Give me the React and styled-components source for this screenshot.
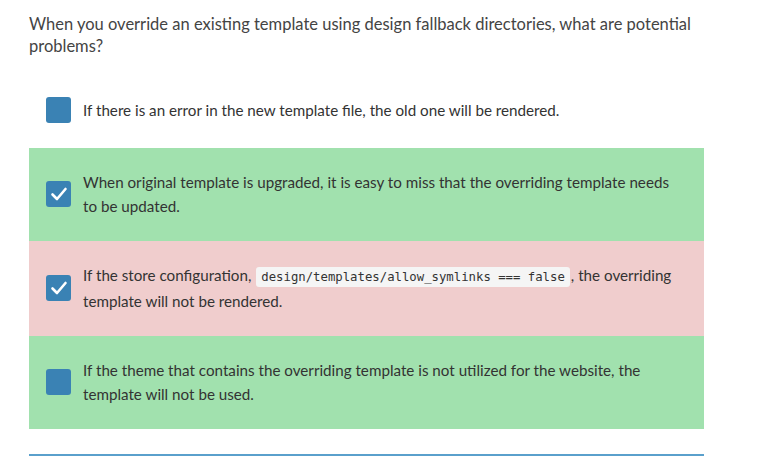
import styled, { createGlobalStyle } from "styled-components";

const GlobalStyle = createGlobalStyle`
  body {
    margin: 0;
    background: #fff;
    font-family: Lato, "Open Sans", sans-serif;
    color: #333;
  }
`;

const Page = styled.div`
  width: 675px;
  padding: 13px 0 0 29px;
`;

const Question = styled.p`
  margin: 0 0 18px;
  font-size: 16.5px;
  line-height: 22px;
  color: #444;
`;

const Options = styled.div`
  display: flex;
  flex-direction: column;
`;

const Option = styled.div`
  display: flex;
  align-items: center;
  gap: 12px;
  padding: ${({ $state }) => ($state ? "22px 18px 23px 17px" : "22px 18px 25px 17px")};
  background: ${({ $state }) =>
    $state === "correct" ? "#a1e1ae" : $state === "wrong" ? "#f0cdcd" : "transparent"};
`;

const Box = styled.div`
  flex: none;
  width: 25px;
  height: 26px;
  border-radius: 3px;
  background: #3a82b4;
  display: flex;
  align-items: center;
  justify-content: center;
`;

const Label = styled.div`
  font-size: 15.2px;
  line-height: 24px;
  color: #333;
`;

const Code = styled.code`
  font-family: "DejaVu Sans Mono", monospace;
  font-size: 12.3px;
  background: #f5f5f5;
  border-radius: 3px;
  padding: 3px 5px;
  margin: 0 1px;
  color: #333;
`;

const Divider = styled.div`
  margin-top: 25px;
  height: 2px;
  background: #5aa0cc;
`;

const Check = () => (
  <svg width="18" height="16" viewBox="0 0 18 16">
    <path d="M2.5 8.5 L7 13 L15.5 3" fill="none" stroke="#fff" strokeWidth="2.6" strokeLinecap="round" strokeLinejoin="round" />
  </svg>
);

const options = [
  { state: null, checked: false, text: "If there is an error in the new template file, the old one will be rendered." },
  { state: "correct", checked: true, text: "When original template is upgraded, it is easy to miss that the overriding template needs to be updated." },
  {
    state: "wrong",
    checked: true,
    text: (
      <>
        If the store configuration, <Code>design/templates/allow_symlinks === false</Code>, the overriding template will not be rendered.
      </>
    ),
  },
  { state: "correct", checked: false, text: "If the theme that contains the overriding template is not utilized for the website, the template will not be used." },
];

export default function App() {
  return (
    <>
      <GlobalStyle />
      <Page>
        <Question>
          When you override an existing template using design fallback directories, what are potential problems?
        </Question>
        <Options>
          {options.map((o, i) => (
            <Option key={i} $state={o.state}>
              <Box>{o.checked && <Check />}</Box>
              <Label>{o.text}</Label>
            </Option>
          ))}
        </Options>
        <Divider />
      </Page>
    </>
  );
}
